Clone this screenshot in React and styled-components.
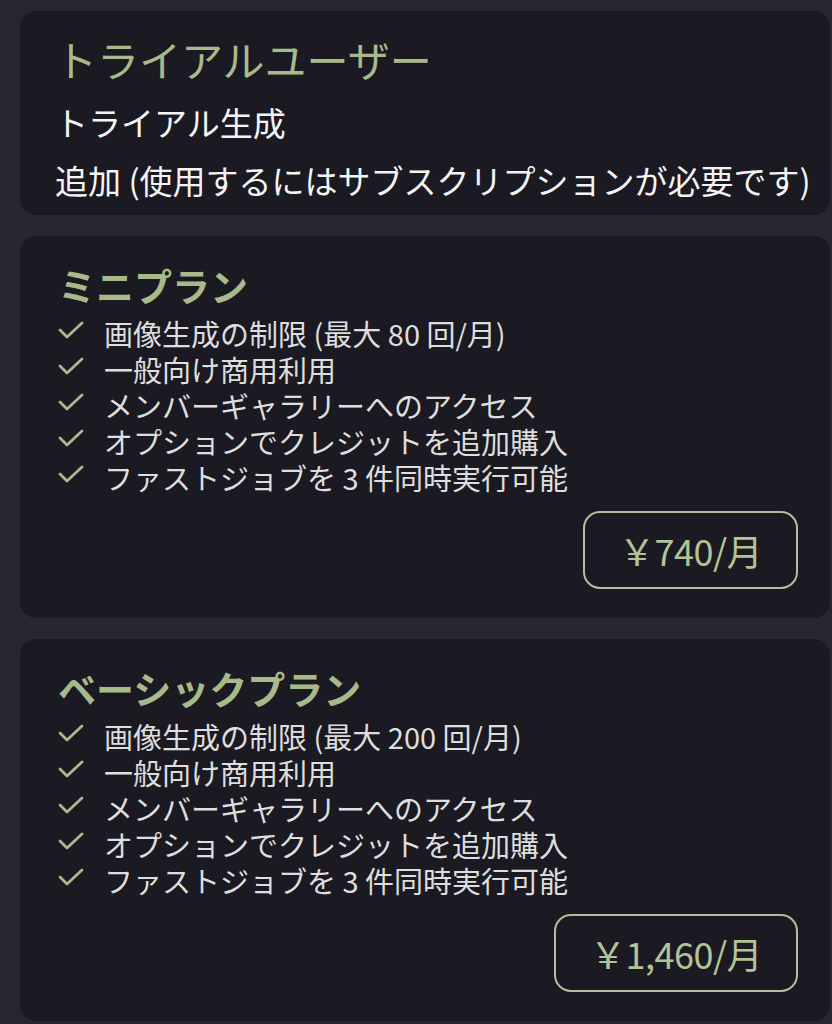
import React from "react";
import styled, { createGlobalStyle } from "styled-components";

const Global = createGlobalStyle`
  html, body {
    margin: 0;
    padding: 0;
    background: #282633;
    overflow: hidden;
  }
  body {
    font-family: "Noto Sans CJK JP", "Noto Sans", sans-serif;
    -webkit-font-smoothing: antialiased;
  }
`;

const Page = styled.div`
  width: 832px;
  height: 1024px;
  box-sizing: border-box;
  padding: 11px 2px 0 20px;
  display: flex;
  flex-direction: column;
  gap: 21px;
`;

const Card = styled.section`
  background: #1b1a23;
  border-radius: 16px;
  box-sizing: border-box;
  padding: ${(p) => p.$pad};
  display: flex;
  flex-direction: column;
`;

const Title = styled.h2`
  margin: 0;
  color: #a8b98a;
  font-size: ${(p) => p.$size}px;
  line-height: ${(p) => p.$lh}px;
  font-weight: ${(p) => p.$weight};
  letter-spacing: 0;
`;

const InfoLine = styled.p`
  margin: 0;
  color: #f4f4f4;
  font-size: 33px;
  line-height: 58px;
  font-weight: 400;
  white-space: nowrap;
`;

const InfoBlock = styled.div`
  margin-top: 6px;
  display: flex;
  flex-direction: column;
`;

const Features = styled.ul`
  list-style: none;
  margin: 5px 0 0;
  padding: 0;
  display: flex;
  flex-direction: column;
`;

const Feature = styled.li`
  display: flex;
  align-items: center;
  gap: 20px;
  height: 36px;
  color: #dedede;
  font-size: 29px;
  line-height: 36px;
  white-space: nowrap;
`;

const Check = styled.svg`
  width: 26px;
  height: 20px;
  flex: none;
  margin-top: -6px;
`;

const Footer = styled.div`
  display: flex;
  justify-content: flex-end;
  margin-top: 16px;
  padding-right: 32px;
`;

const PriceButton = styled.button`
  box-sizing: border-box;
  height: 78px;
  padding: 0 ${(p) => p.$padX}px;
  border: 2.5px solid #b3bf9b;
  border-radius: 17px;
  background: transparent;
  color: #b3c398;
  font-family: "Noto Sans CJK JP", "Noto Sans", sans-serif;
  font-size: 36px;
  font-weight: 400;
  letter-spacing: -0.5px;
  display: flex;
  align-items: center;
  justify-content: center;
`;

const CheckIcon = () => (
  <Check viewBox="0 0 26 20" fill="none">
    <polyline
      points="2,10 9,17 24,3"
      stroke="#a9b98b"
      strokeWidth="2.8"
      strokeLinecap="round"
      strokeLinejoin="round"
    />
  </Check>
);

const features = (count) => [
  `画像生成の制限 (最大 ${count} 回/月)`,
  "一般向け商用利用",
  "メンバーギャラリーへのアクセス",
  "オプションでクレジットを追加購入",
  "ファストジョブを 3 件同時実行可能",
];

const plans = [
  { name: "ミニプラン", count: 80, price: "￥740/月", padX: 34 },
  { name: "ベーシックプラン", count: 200, price: "￥1,460/月", padX: 34 },
];

export default function App() {
  return (
    <>
      <Global />
      <Page>
        <Card $pad="20px 0 6px 35px">
          <Title $size={42} $lh={56} $weight={400}>
            トライアルユーザー
          </Title>
          <InfoBlock>
            <InfoLine>トライアル生成</InfoLine>
            <InfoLine>追加 (使用するにはサブスクリプションが必要です)</InfoLine>
          </InfoBlock>
        </Card>
        {plans.map((plan) => (
          <Card key={plan.name} $pad="24px 0 29px 38px">
            <Title $size={38} $lh={50} $weight={600}>
              {plan.name}
            </Title>
            <Features>
              {features(plan.count).map((f) => (
                <Feature key={f}>
                  <CheckIcon />
                  <span>{f}</span>
                </Feature>
              ))}
            </Features>
            <Footer>
              <PriceButton $padX={plan.padX}>{plan.price}</PriceButton>
            </Footer>
          </Card>
        ))}
      </Page>
    </>
  );
}
